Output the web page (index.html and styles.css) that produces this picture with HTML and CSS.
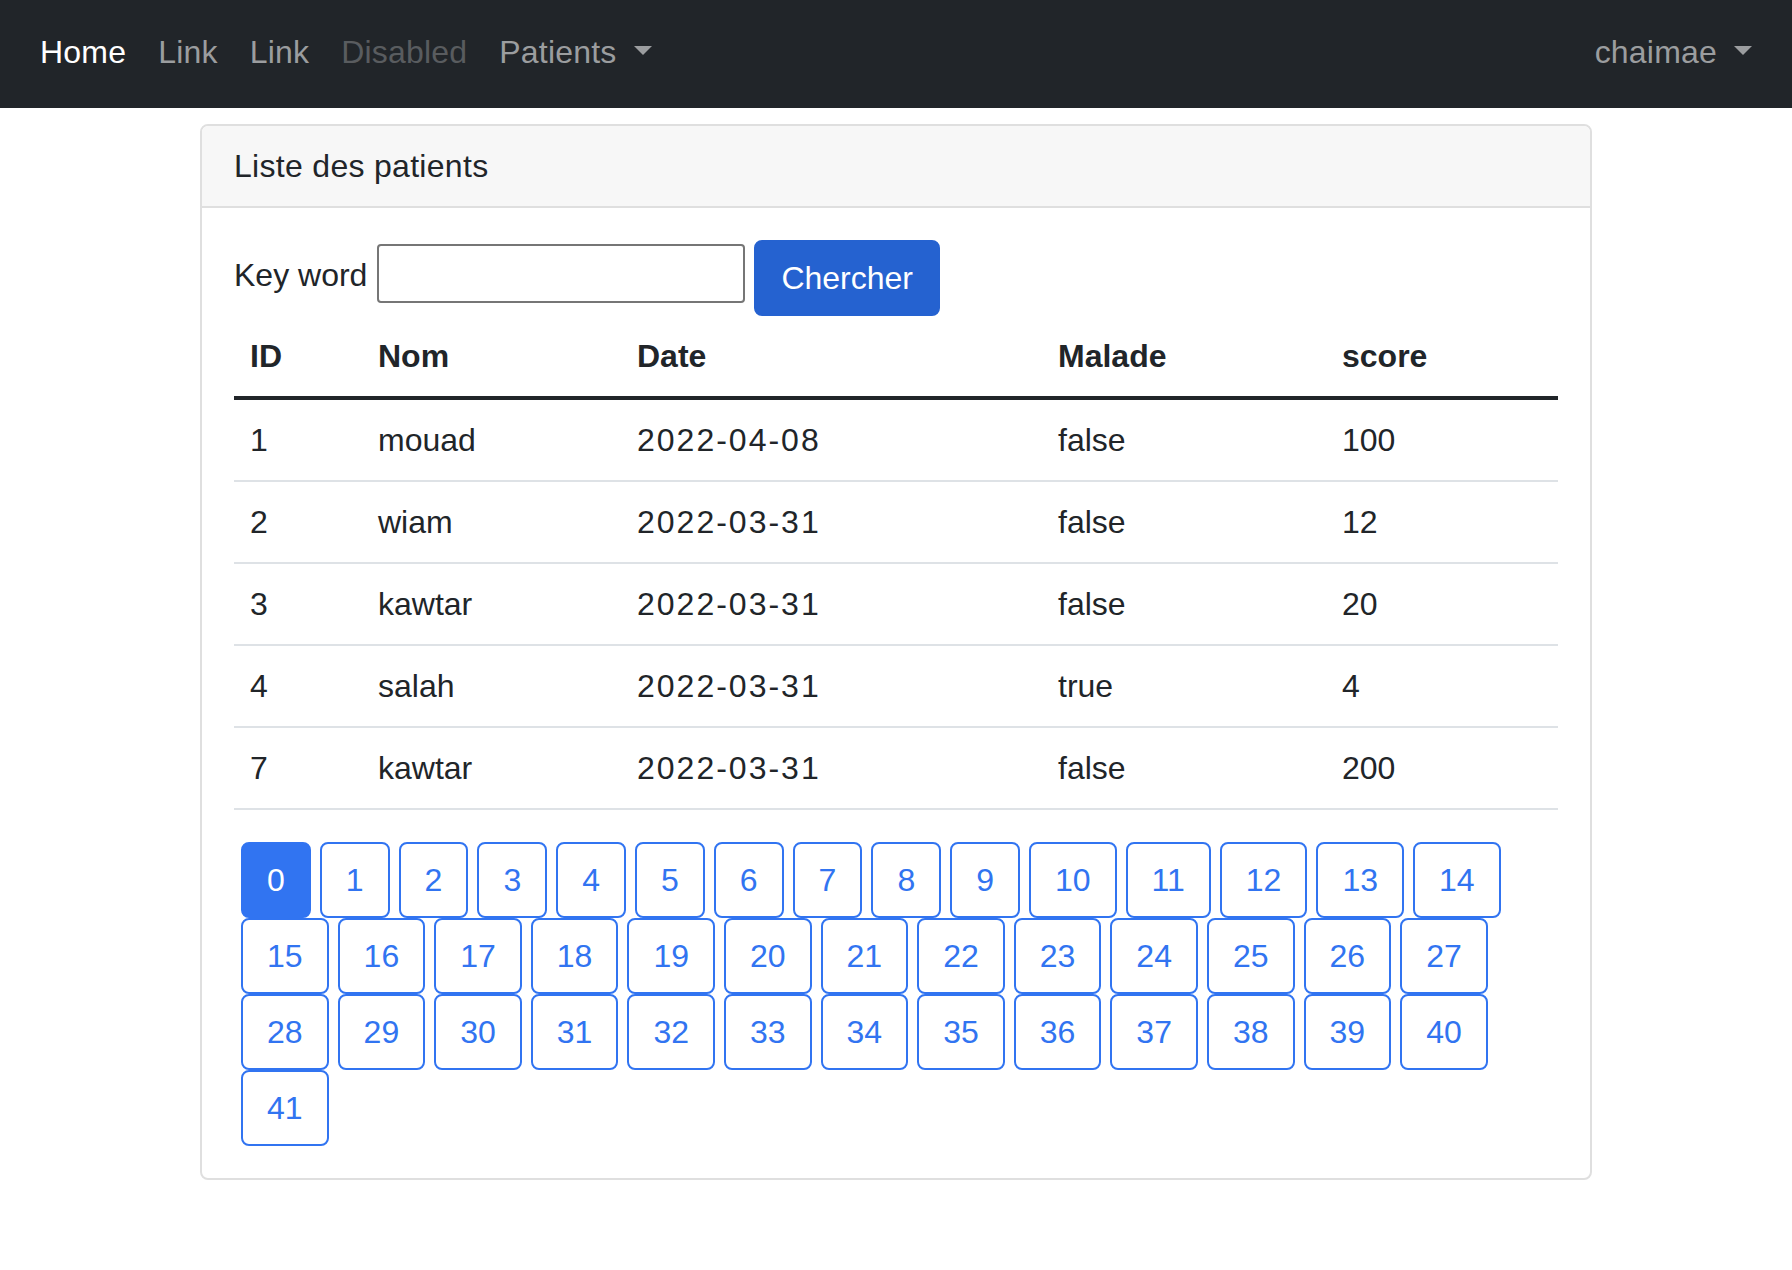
FILE: index.html
```html
<!DOCTYPE html>
<html lang="fr">
<head>
<meta charset="utf-8">
<title>Patients</title>
<link rel="stylesheet" href="styles.css">
</head>
<body>
<nav class="navbar">
  <ul class="nav-list">
    <li><a class="nav-link active" href="#">Home</a></li>
    <li><a class="nav-link" href="#">Link</a></li>
    <li><a class="nav-link" href="#">Link</a></li>
    <li><a class="nav-link disabled" href="#">Disabled</a></li>
    <li><a class="nav-link dropdown" href="#">Patients</a></li>
  </ul>
  <ul class="nav-list">
    <li><a class="nav-link dropdown" href="#">chaimae</a></li>
  </ul>
</nav>
<main class="container">
  <section class="card">
    <header class="card-header">Liste des patients</header>
    <div class="card-body">
      <form class="search">
        <label class="search-label" for="kw">Key word</label>
        <input class="search-input" id="kw" type="text">
        <button class="btn-search" type="button">Chercher</button>
      </form>
      <table class="table">
        <thead>
          <tr>
            <th class="c-id">ID</th>
            <th class="c-nom">Nom</th>
            <th class="c-date">Date</th>
            <th class="c-malade">Malade</th>
            <th class="c-score">score</th>
          </tr>
        </thead>
        <tbody>
          <tr><td>1</td><td>mouad</td><td class="date">2022-04-08</td><td>false</td><td>100</td></tr>
          <tr><td>2</td><td>wiam</td><td class="date">2022-03-31</td><td>false</td><td>12</td></tr>
          <tr><td>3</td><td>kawtar</td><td class="date">2022-03-31</td><td>false</td><td>20</td></tr>
          <tr><td>4</td><td>salah</td><td class="date">2022-03-31</td><td>true</td><td>4</td></tr>
          <tr><td>7</td><td>kawtar</td><td class="date">2022-03-31</td><td>false</td><td>200</td></tr>
        </tbody>
      </table>
      <ul class="pages">
        <li><a class="page active" href="#">0</a></li>
        <li><a class="page" href="#">1</a></li>
        <li><a class="page" href="#">2</a></li>
        <li><a class="page" href="#">3</a></li>
        <li><a class="page" href="#">4</a></li>
        <li><a class="page" href="#">5</a></li>
        <li><a class="page" href="#">6</a></li>
        <li><a class="page" href="#">7</a></li>
        <li><a class="page" href="#">8</a></li>
        <li><a class="page" href="#">9</a></li>
        <li><a class="page" href="#">10</a></li>
        <li><a class="page" href="#">11</a></li>
        <li><a class="page" href="#">12</a></li>
        <li><a class="page" href="#">13</a></li>
        <li><a class="page" href="#">14</a></li>
        <li><a class="page" href="#">15</a></li>
        <li><a class="page" href="#">16</a></li>
        <li><a class="page" href="#">17</a></li>
        <li><a class="page" href="#">18</a></li>
        <li><a class="page" href="#">19</a></li>
        <li><a class="page" href="#">20</a></li>
        <li><a class="page" href="#">21</a></li>
        <li><a class="page" href="#">22</a></li>
        <li><a class="page" href="#">23</a></li>
        <li><a class="page" href="#">24</a></li>
        <li><a class="page" href="#">25</a></li>
        <li><a class="page" href="#">26</a></li>
        <li><a class="page" href="#">27</a></li>
        <li><a class="page" href="#">28</a></li>
        <li><a class="page" href="#">29</a></li>
        <li><a class="page" href="#">30</a></li>
        <li><a class="page" href="#">31</a></li>
        <li><a class="page" href="#">32</a></li>
        <li><a class="page" href="#">33</a></li>
        <li><a class="page" href="#">34</a></li>
        <li><a class="page" href="#">35</a></li>
        <li><a class="page" href="#">36</a></li>
        <li><a class="page" href="#">37</a></li>
        <li><a class="page" href="#">38</a></li>
        <li><a class="page" href="#">39</a></li>
        <li><a class="page" href="#">40</a></li>
        <li><a class="page" href="#">41</a></li>
      </ul>
    </div>
  </section>
</main>
</body>
</html>
```
FILE: styles.css
```css
* { box-sizing: border-box; }

html, body {
  margin: 0;
  padding: 0;
  background: #fff;
}

body {
  font-family: "Liberation Sans", Arial, sans-serif;
  font-size: 32px;
  line-height: 48px;
  color: #212529;
}

/* Navbar */
.navbar {
  height: 108px;
  background: #212529;
  padding: 0 24px;
  display: flex;
  justify-content: space-between;
  align-items: flex-start;
}

.nav-list {
  list-style: none;
  margin: 0;
  padding: 0;
  display: flex;
}

.nav-link {
  display: block;
  padding: 28px 16px 32px;
  line-height: 48px;
  color: #9b9d9f;
  text-decoration: none;
  letter-spacing: 0.2px;
}

.nav-link.active { color: #fff; }
.nav-link.disabled { color: #595c5f; }

.dropdown::after {
  content: "";
  display: inline-block;
  margin-left: 17px;
  vertical-align: 0.255em;
  border-top: 0.3em solid;
  border-right: 0.3em solid transparent;
  border-left: 0.3em solid transparent;
  border-bottom: 0;
}

/* Layout */
.container {
  width: 1440px;
  margin: 0 auto;
  padding: 16px 24px 0;
}

.card {
  border: 2px solid #dfdfdf;
  border-radius: 8px;
  background: #fff;
}

.card-header {
  background: #f7f7f7;
  padding: 16px 32px;
  border-bottom: 2px solid #dfdfdf;
  border-radius: 6px 6px 0 0;
  letter-spacing: 0.3px;
}

.card-body {
  padding: 32px;
}

/* Search form */
.search {
  display: flex;
  align-items: flex-start;
  margin: 0;
}

.search-label {
  margin-top: 11px;
  margin-right: 10px;
}

.search-input {
  margin-top: 4px;
  width: 368px;
  height: 59px;
  border: 2px solid #767676;
  border-radius: 4px;
  font: inherit;
  padding: 2px 6px;
  margin-right: 9px;
}

.btn-search {
  font: inherit;
  line-height: 48px;
  color: #fff;
  background: #2562d0;
  border: 2px solid #2562d0;
  border-radius: 8px;
  padding: 12px 25px;
}

/* Table */
.table {
  width: 100%;
  border-collapse: collapse;
  margin-bottom: 32px;
}

.table th,
.table td {
  text-align: left;
  padding: 16px;
  border-bottom: 2px solid #dee2e6;
  line-height: 48px;
}

.table th {
  font-weight: bold;
}

.table thead th {
  border-bottom: 4px solid #212529;
}

.table .date {
  letter-spacing: 2px;
}

.c-id { width: 128px; }
.c-nom { width: 259px; }
.c-date { width: 421px; }
.c-malade { width: 284px; }
.c-score { width: 232px; }

/* Pagination */
.pages {
  list-style: none;
  margin: 0;
  padding: 0 0 0 7px;
  display: flex;
  flex-wrap: wrap;
  column-gap: 9px;
}

.page {
  display: block;
  padding: 12px 24px;
  line-height: 48px;
  border: 2px solid #3174f1;
  border-radius: 8px;
  color: #3174f1;
  text-decoration: none;
}

.page.active {
  background: #3174f1;
  color: #fff;
}
```
